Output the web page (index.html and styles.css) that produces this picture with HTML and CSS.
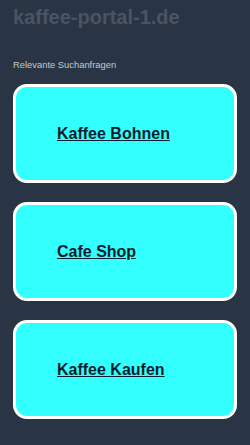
FILE: index.html
```html
<!DOCTYPE html>
<html lang="de">
<head>
<meta charset="utf-8">
<title>kaffee-portal-1.de</title>
<link rel="stylesheet" href="styles.css">
</head>
<body>
<div class="page">
  <h1 class="site-title">kaffee-portal-1.de</h1>
  <p class="subtitle">Relevante Suchanfragen</p>
  <ul class="cards">
    <li class="card"><a class="card-link" href="#">Kaffee Bohnen</a></li>
    <li class="card"><a class="card-link" href="#">Cafe Shop</a></li>
    <li class="card"><a class="card-link" href="#">Kaffee Kaufen</a></li>
  </ul>
</div>
</body>
</html>
```
FILE: styles.css
```css
html, body {
  margin: 0;
  padding: 0;
  background: #293545;
  height: 100%;
}
.page {
  padding: 6px 13px 0 13px;
  font-family: "Liberation Sans", Arial, sans-serif;
}
.site-title {
  margin: 0;
  font-size: 20px;
  font-weight: bold;
  line-height: 23px;
  color: #4a5462;
}
.subtitle {
  margin: 30px 0 0 0;
  font-size: 9.4px;
  line-height: 11px;
  color: #c3c8ce;
}
.cards {
  list-style: none;
  margin: 14px 0 0 0;
  padding: 0;
  display: flex;
  flex-direction: column;
  gap: 19px;
}
.card {
  box-sizing: border-box;
  height: 99px;
  width: 224px;
  border: 3px solid #ffffff;
  border-radius: 14px;
  background: #33ffff;
  display: flex;
  align-items: center;
  padding-left: 41px;
}
.card-link {
  font-size: 16px;
  font-weight: bold;
  color: #0b1d2a;
  text-decoration: underline;
}
```
